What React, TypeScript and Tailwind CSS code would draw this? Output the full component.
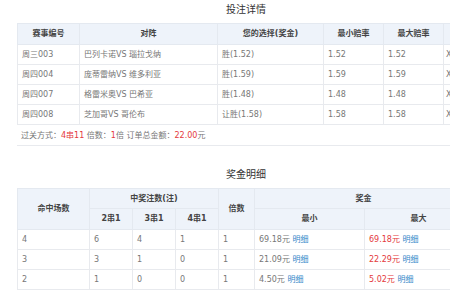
const FONT = { fontFamily: '"DejaVu Sans", "Noto Sans CJK SC", sans-serif' };

const bets = [
  { id: "周三003", match: "巴列卡诺VS 瑙拉戈纳", pick: "胜(1.52)", min: "1.52", max: "1.52" },
  { id: "周四004", match: "庞蒂雷纳VS 维多利亚", pick: "胜(1.59)", min: "1.59", max: "1.59" },
  { id: "周四007", match: "格雷米奥VS 巴希亚", pick: "胜(1.48)", min: "1.48", max: "1.48" },
  { id: "周四008", match: "芝加哥VS 哥伦布", pick: "让胜(1.58)", min: "1.58", max: "1.58" },
];

const prizes = [
  { hit: "4", a: "6", b: "4", c: "1", times: "1", min: "69.18", max: "69.18" },
  { hit: "3", a: "3", b: "1", c: "0", times: "1", min: "21.09", max: "22.29" },
  { hit: "2", a: "1", b: "0", c: "0", times: "1", min: "4.50", max: "5.02" },
];

const th = "border border-[#e4e9f0] bg-[#eef3fa] font-bold text-[#444] text-center p-0 leading-none";
const td = "border border-[#e8eaee] text-[#777] pl-[4px] p-0 h-[20px] text-left leading-none";

export default function App() {
  return (
    <div className="w-[450px] h-[300px] overflow-hidden bg-white text-[8px]" style={FONT}>
      <div className="ml-[17px] w-[458px]">
        {/* 投注详情 */}
        <h2 className="h-[23px] pt-[4px] leading-[12px] text-center text-[10px] text-[#333]">投注详情</h2>
        <table className="w-[458px] table-fixed border-collapse">
          <colgroup>
            <col className="w-[62px]" />
            <col className="w-[138px]" />
            <col className="w-[106px]" />
            <col className="w-[60px]" />
            <col className="w-[60px]" />
            <col className="w-[32px]" />
          </colgroup>
          <thead>
            <tr className="h-[21px]">
              <th className={th}>赛事编号</th>
              <th className={th}>对阵</th>
              <th className={th}>您的选择(奖金)</th>
              <th className={th}>最小赔率</th>
              <th className={th}>最大赔率</th>
              <th className={th}></th>
            </tr>
          </thead>
          <tbody>
            {bets.map((b) => (
              <tr key={b.id}>
                <td className={td}>{b.id}</td>
                <td className={td}>{b.match}</td>
                <td className={td}>{b.pick}</td>
                <td className={td}>{b.min}</td>
                <td className={td}>{b.max}</td>
                <td className="border border-[#e8eaee] text-[#777] pl-[2px] p-0 h-[20px] leading-none">X</td>
              </tr>
            ))}
          </tbody>
        </table>
        <div className="h-[21px] leading-[22px] pl-[4px] text-[#777] border-b border-[#e8eaee]">
          过关方式：<span className="text-[#e4393c]">4串11</span> 倍数：<span className="text-[#e4393c]">1</span>倍 订单总金额：
          <span className="text-[#e4393c]">22.00</span>元
        </div>

        {/* 奖金明细 */}
        <h2 className="h-[42px] pt-[23px] leading-[12px] text-center text-[10px] text-[#333]">奖金明细</h2>
        <table className="w-[455px] table-fixed border-collapse">
          <colgroup>
            <col className="w-[72px]" />
            <col className="w-[43px]" />
            <col className="w-[43px]" />
            <col className="w-[43px]" />
            <col className="w-[36px]" />
            <col className="w-[110px]" />
            <col className="w-[108px]" />
          </colgroup>
          <thead>
            <tr className="h-[20px]">
              <th className={th} rowSpan={2}>命中场数</th>
              <th className={th} colSpan={3}>中奖注数(注)</th>
              <th className={th} rowSpan={2}>倍数</th>
              <th className={th} colSpan={2}>奖金</th>
            </tr>
            <tr className="h-[21px]">
              <th className={th}>2串1</th>
              <th className={th}>3串1</th>
              <th className={th}>4串1</th>
              <th className={th}>最小</th>
              <th className={th}>最大</th>
            </tr>
          </thead>
          <tbody>
            {prizes.map((p) => (
              <tr key={p.hit}>
                <td className={td}>{p.hit}</td>
                <td className={td}>{p.a}</td>
                <td className={td}>{p.b}</td>
                <td className={td}>{p.c}</td>
                <td className={td}>{p.times}</td>
                <td className={td}>
                  {p.min}元 <span className="text-[#2f86c8]">明细</span>
                </td>
                <td className={td}>
                  <span className="text-[#e4393c]">{p.max}元</span> <span className="text-[#2f86c8]">明细</span>
                </td>
              </tr>
            ))}
          </tbody>
        </table>
      </div>
    </div>
  );
}
